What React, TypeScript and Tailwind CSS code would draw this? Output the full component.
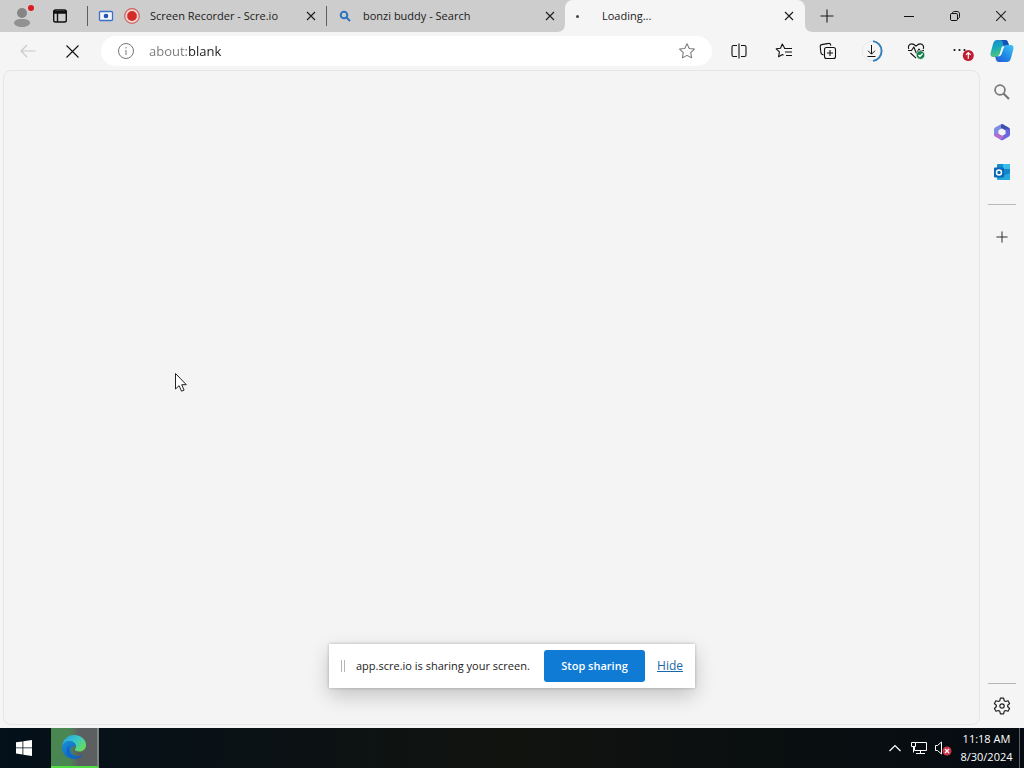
import type { ReactNode } from "react";

const uiFont = "font-['Open_Sans','Noto_Sans',sans-serif]";

function Cross({ size = 10, weight = 1.1 }: { size?: number; weight?: number }) {
  return (
    <svg width={size} height={size} viewBox="0 0 10 10" fill="none" stroke="currentColor" strokeWidth={weight}>
      <path d="M1 1l8 8M9 1l-8 8" />
    </svg>
  );
}

function Plus({ size }: { size: number }) {
  return (
    <svg width={size} height={size} viewBox="0 0 14 14" fill="none" stroke="currentColor" strokeWidth="1.1">
      <path d="M7 0.5v13M0.5 7h13" />
    </svg>
  );
}

function IconButton({ label, className = "", children }: { label: string; className?: string; children: ReactNode }) {
  return (
    <button type="button" aria-label={label} className={`flex items-center justify-center ${className}`}>
      {children}
    </button>
  );
}

function Tab({ icons, title, gap }: { icons: ReactNode; title: string; gap: string }) {
  return (
    <div className="flex h-5 w-[239px] items-center border-l border-[#5f5f5f] pl-[10px] pr-[9px]">
      <div className={`flex items-center ${gap}`}>{icons}</div>
      <span className="flex-1 truncate text-[11px] leading-4">{title}</span>
      <IconButton label={`Close ${title}`} className="h-4 w-3">
        <Cross />
      </IconButton>
    </div>
  );
}

function TabStrip() {
  return (
    <div className="flex h-8 items-center bg-[#cdcdcd] text-[#1b1b1b]">
      <div className="flex w-[87px] items-center">
        <IconButton label="Profile" className="h-8 w-[46px]">
          <svg width="24" height="26" viewBox="0 0 24 26">
            <circle cx="11" cy="10" r="5" fill="#858585" />
            <path d="M3 20c0-2.500 3-4 8-4s8 1.500 8 4c0 2.300-3.500 4-8 4s-8-1.700-8-4z" fill="#929292" />
            <circle cx="20" cy="5" r="3" fill="#dc1b1b" />
          </svg>
        </IconButton>
        <IconButton label="Tab actions menu" className="h-8 w-7">
          <svg width="16" height="16" viewBox="0 0 16 16" fill="none" stroke="#111" strokeWidth="1.400">
            <rect x="1.700" y="2" width="12.600" height="12" rx="1.800" />
            <path d="M1.700 3.500h12.600M1.700 5h12.600M5.500 5v9" />
          </svg>
        </IconButton>
      </div>
      <Tab
        title="Screen Recorder - Scre.io"
        gap="w-[52px] gap-[10px]"
        icons={
          <>
            <svg width="16" height="16" viewBox="0 0 16 16">
              <rect x="1.500" y="3.500" width="13" height="9" rx="1" fill="#f2f6fc" stroke="#3c72c8" strokeWidth="1.300" />
              <circle cx="8" cy="8" r="2.300" fill="#2456ae" />
            </svg>
            <svg width="16" height="16" viewBox="0 0 16 16">
              <circle cx="8" cy="8" r="7.300" fill="#eedcda" stroke="#d2605a" strokeWidth="1.200" />
              <circle cx="8" cy="8" r="4.900" fill="#d22b28" />
            </svg>
          </>
        }
      />
      <Tab
        title="bonzi buddy - Search"
        gap="w-[26px]"
        icons={
          <svg width="16" height="16" viewBox="0 0 16 16" fill="none" stroke="#2c74bd" strokeWidth="2">
            <circle cx="7" cy="7" r="3.300" />
            <path d="M9.500 9.500L13 13" />
          </svg>
        }
      />
      <div className="relative flex h-8 w-60 items-center rounded-t-lg bg-[#f5f5f5] pl-[11px] pr-[10px]">
        <svg className="absolute -left-2 bottom-0" width="8" height="8" viewBox="0 0 8 8">
          <path d="M8 0v8H0c5 0 8-3 8-8z" fill="#f5f5f5" />
        </svg>
        <svg className="absolute -right-2 bottom-0" width="8" height="8" viewBox="0 0 8 8">
          <path d="M0 0v8h8C3 8 0 5 0 0z" fill="#f5f5f5" />
        </svg>
        <span className="flex w-[26px]">
          <span className="mt-px h-[3px] w-[3px] rounded-full bg-[#444]" />
        </span>
        <span className="flex-1 text-[11px] leading-4">Loading...</span>
        <IconButton label="Close Loading tab" className="h-4 w-3">
          <Cross />
        </IconButton>
      </div>
      <IconButton label="New tab" className="h-8 w-11">
        <Plus size={14} />
      </IconButton>
      <div className="ml-auto flex">
        <IconButton label="Minimize" className="h-8 w-[46px]">
          <svg width="10" height="10" viewBox="0 0 10 10" stroke="#111"><path d="M0 5.500h10" /></svg>
        </IconButton>
        <IconButton label="Restore" className="h-8 w-[46px]">
          <svg width="10" height="10" viewBox="0 0 10 10" fill="none" stroke="#111">
            <rect x="0.500" y="2.500" width="7" height="7" rx="1.300" />
            <path d="M2.500 2.200c0-1 .7-1.700 1.700-1.700h3c1.300 0 2.300 1 2.300 2.300v3c0 1-.7 1.700-1.700 1.700" />
          </svg>
        </IconButton>
        <IconButton label="Close window" className="h-8 w-[46px]">
          <Cross size={12} weight={0.9} />
        </IconButton>
      </div>
    </div>
  );
}

const starPath = "M8 1.500l2 4.200 4.600.6-3.300 3.200.8 4.600L8 11.900l-4.100 2.200.8-4.600L1.400 6.300 6 5.700z";

function Toolbar() {
  return (
    <div className="flex h-[38px] items-center bg-[#f5f5f5] pr-1 text-[#111]">
      <IconButton label="Back" className="h-8 w-14 text-[#c8c8c8]">
        <svg width="16" height="14" viewBox="0 0 16 14" fill="none" stroke="currentColor" strokeWidth="1.100">
          <path d="M15.500 7H1M7 1L1 7l6 6" />
        </svg>
      </IconButton>
      <IconButton label="Stop loading" className="mr-[13px] h-8 w-8">
        <Cross size={15} weight={0.75} />
      </IconButton>
      <div className="flex h-[30px] min-w-0 flex-1 items-center rounded-full bg-white pl-4 pr-4">
        <IconButton label="View site information" className="h-6 w-[18px] text-[#777]">
          <svg width="18" height="18" viewBox="0 0 18 18" fill="none" stroke="currentColor">
            <circle cx="9" cy="9" r="7.500" />
            <path d="M9 8v5M9 5v1.500" />
          </svg>
        </IconButton>
        <input
          aria-label="Address"
          className="ml-[14px] h-6 min-w-0 flex-1 bg-linear-to-r from-[#777] from-[39px] to-[#1a1a1a] to-[39px] bg-clip-text text-[13px] leading-5 text-transparent outline-none"
          defaultValue="about:blank"
        />
        <IconButton label="Add to favorites" className="h-6 w-[18px] text-[#777]">
          <svg width="18" height="18" viewBox="0 0 16 16" fill="none" stroke="currentColor" strokeWidth="0.900" strokeLinejoin="round">
            <path d={starPath} />
          </svg>
        </IconButton>
      </div>
      <div className="ml-[5px] grid w-[267px] grid-cols-6">
        <IconButton label="Split screen" className="h-8">
          <svg width="16" height="16" viewBox="0 0 16 16" fill="none" stroke="#111" strokeWidth="1.100">
            <path d="M6 2.500H2.500c-1 0-1.500.5-1.500 1.500v8c0 1 .5 1.500 1.500 1.500H6M10 2.500h3.500c1 0 1.500.5 1.500 1.500v8c0 1-.5 1.500-1.500 1.500H10M8 .5v15" />
          </svg>
        </IconButton>
        <IconButton label="Favorites" className="h-8">
          <svg width="18" height="18" viewBox="0 0 18 18" fill="none" stroke="#111" strokeWidth="1.100" strokeLinejoin="round">
            <path d="M9.800 6.500L7.300 2 5.500 6.200l-4.300.6 3.200 3.100-.8 4.900 3.800-2.200 1.100.6" />
            <path d="M9.200 6.500H17M10 10h7M11 13.500h6" />
          </svg>
        </IconButton>
        <IconButton label="Collections" className="h-8">
          <svg width="18" height="18" viewBox="0 0 18 18" fill="none" stroke="#111" strokeWidth="1.100">
            <path d="M4.500 13L3 12.200c-.7-.3-1-.8-1.100-1.500L1.200 4.500c-.1-1 .4-1.700 1.400-1.900l7.100-1.200c1-.2 1.700.4 1.900 1.300l.2 1" />
            <rect x="5.500" y="5.500" width="11" height="11" rx="2" />
            <path d="M11 8v6M8 11h6" />
          </svg>
        </IconButton>
        <IconButton label="Downloads" className="h-8">
          <svg width="22" height="22" viewBox="0 0 22 22" fill="none">
            <circle cx="10" cy="11" r="9.800" stroke="#e5eaf0" strokeWidth="1" />
            <path d="M11 1.100a10 10 0 0 1 0 19.800" stroke="#327fba" strokeWidth="1.900" />
            <path d="M9.500 5v9M6 10.700l3.500 3.500 3.500-3.500M5.500 16.500h8" stroke="#111" strokeWidth="1" />
          </svg>
        </IconButton>
        <IconButton label="Browser essentials" className="h-8">
          <svg width="20" height="20" viewBox="0 0 20 20" fill="none" stroke="#111" strokeWidth="1.100" strokeLinejoin="round">
            <path d="M1.800 8C.5 5.200 2.500 2.900 4.800 2.900c1.700 0 2.900 1 4.200 2.300 1.300-1.300 2.500-2.300 4.200-2.300 2.300 0 4.300 2.300 3 5.100M3.500 12L9 17.200" />
            <path d="M1 9.500h3.500l2.300-3.500 2.700 6.500 2.500-4.500 1.200 1.500H17" />
            <circle cx="13.500" cy="14" r="4.400" fill="#16834b" stroke="#f5f5f5" strokeWidth=".8" />
            <path d="M11.500 14l1.400 1.500 2.700-3" stroke="white" strokeWidth="1.200" />
          </svg>
        </IconButton>
        <IconButton label="Settings and more" className="h-8">
          <svg width="24" height="20" viewBox="0 0 24 20">
            <circle cx="4.500" cy="9" r="1.100" fill="#111" />
            <circle cx="9.500" cy="9" r="1.100" fill="#111" />
            <circle cx="14.500" cy="9" r="1.100" fill="#111" />
            <circle cx="18.300" cy="14.500" r="5.500" fill="#bf1d32" />
            <path d="M18.300 17.800v-6M16 13.800l2.300-2.300 2.300 2.300" fill="none" stroke="white" strokeWidth="1.200" />
          </svg>
        </IconButton>
      </div>
      <IconButton label="Copilot" className="h-8 w-9">
        <svg width="24" height="24" viewBox="0 0 24 24">
          <defs>
            <linearGradient id="copilot-left" x1="0" y1="0" x2=".3" y2="1">
              <stop stopColor="#1686cf" />
              <stop offset=".5" stopColor="#1aa9b8" />
              <stop offset="1" stopColor="#51c878" />
            </linearGradient>
            <linearGradient id="copilot-right" x1="1" y1="0" x2="0" y2="1">
              <stop stopColor="#45c6f5" />
              <stop offset=".5" stopColor="#218ce7" />
              <stop offset="1" stopColor="#2356d6" />
            </linearGradient>
          </defs>
          <path d="M7 1h8c2 0 2.600 1.200 3.200 3l.8 3h-4c-2 0-3 1-3.600 3l-1.700 5.200C9.200 16.700 8 18 5.800 18H3.200C.8 18 .1 16.300.6 14L3 5C3.700 2.300 5 1 7 1z" fill="url(#copilot-left)" />
          <path d="M15.500 1c1.600 0 2.300 1.500 2.800 3l.8 3h-5.600L13 4c-.4-1.700-1-2.500-2.500-3z" fill="#1750b8" />
          <path d="M17 23H9c-2 0-2.600-1.200-3.200-3L5 17.500h1.500c2.500 0 3.600-1.300 4.200-3.300l1.700-5C13 7.200 14.300 6 16.300 6h4.500c2.400 0 3.100 1.700 2.600 4L21 19c-.7 2.700-2 4-4 4z" fill="url(#copilot-right)" />
          <path d="M12 7.500h2.800c-.8.700-1.200 1.500-1.500 2.500l-1.500 4.500c-.5 1.500-1.200 2.300-2.300 2.700H7.800c1.300-.7 1.800-1.500 2.200-2.800l1.300-4.300c.2-.9.400-1.900.7-2.600z" fill="#eafaff" />
        </svg>
      </IconButton>
    </div>
  );
}

function Sidebar() {
  return (
    <aside className="flex w-11 flex-col items-center">
      <IconButton label="Search" className="mt-[6px] h-8 w-8">
        <svg width="18" height="18" viewBox="0 0 18 18" fill="none" stroke="#777">
          <circle cx="7" cy="7" r="4.900" strokeWidth="1.700" />
          <path d="M10.500 10.500l5.500 5.500" strokeWidth="2.200" />
        </svg>
      </IconButton>
      <IconButton label="Microsoft 365" className="mt-2 h-8 w-8">
        <svg width="18" height="18" viewBox="0 0 18 18">
          <path d="M8 1.200L2.500 4.300C1.500 4.900 1 5.700 1 6.800v5c0 .8.500 1.400 1.200 1.800L5.500 11V7.500L12 3.500 9.800 1.200c-.6-.3-1.200-.3-1.800 0z" fill="#7f8de2" />
          <path d="M9.800 1.200l5.800 3.200c.9.500 1.400 1.300 1.400 2.400v3.400l-4.500-2.700L8 5.200V2.700c0-.8.900-1.900 1.800-1.500z" fill="#3a4fb0" />
          <path d="M17 7v4.500c0 1-.5 1.800-1.400 2.300L10 17c-.7.400-1.400.3-2 0l-2.200-2.200 6.700-3.800V5.500l3.300 1z" fill="#6b66df" />
          <path d="M1.500 10.700l4-.2 5.500 3-3 3.400-5.500-3.100c-.9-.5-1.300-1.700-1-3.100z" fill="#b66bd0" />
          <path d="M9 5.500l3.200 1.800v3.500L9 12.600l-3.200-1.800V7.300z" fill="#f5f5f5" />
        </svg>
      </IconButton>
      <IconButton label="Outlook" className="mt-2 h-8 w-8">
        <svg width="18" height="18" viewBox="0 0 18 18">
          <rect x="4" y="1" width="13" height="15" rx="1" fill="#168cd0" />
          <path d="M10 1h7v5h-7z" fill="#38bce9" />
          <path d="M10 6h7v5h-7z" fill="#1684ca" />
          <path d="M4 16l13-6v6c0 .6-.4 1-1 1H5c-.6 0-1-.4-1-1z" fill="#26a8df" />
          <rect x="1" y="4.500" width="10" height="10" rx="1" fill="#0868b5" />
          <circle cx="6" cy="9.500" r="2.500" fill="none" stroke="white" strokeWidth="1.500" />
        </svg>
      </IconButton>
      <hr className="mt-4 w-7 border-[#b9b9b9]" />
      <IconButton label="Customize sidebar" className="mt-4 h-8 w-8 text-[#222]">
        <Plus size={12} />
      </IconButton>
      <hr className="mt-auto w-7 border-[#b5b5b5]" />
      <IconButton label="Settings" className="mb-[6px] mt-[6px] h-8 w-8">
        <svg width="18" height="18" viewBox="0 0 18 18" fill="none" stroke="#222" strokeWidth="1.200" strokeLinejoin="round">
          <path d="M7.400 1.200h3.200l.6 2.500 1.300.8 2.500-.8 1.600 2.800-1.900 1.700v1.600l1.900 1.700-1.600 2.800-2.500-.8-1.300.8-.6 2.500H7.400l-.6-2.500-1.300-.8-2.500.8-1.600-2.800 1.900-1.700V8.200L1.400 6.500 3 3.700l2.500.8 1.300-.8z" />
          <circle cx="9" cy="9" r="2.200" />
        </svg>
      </IconButton>
    </aside>
  );
}

function SharingBar() {
  return (
    <div className="absolute bottom-20 left-1/2 flex h-11 w-[366px] -translate-x-1/2 items-center bg-white pl-3 pr-3 shadow-[0_8px_20px_rgba(0,0,0,0.2),0_0_3px_rgba(0,0,0,0.25)]">
      <span className="h-3 w-1 border-x border-[#b5b5b5]" />
      <span className="ml-[11px] flex-1 whitespace-nowrap text-[11px] leading-4 text-[#222]">app.scre.io is sharing your screen.</span>
      <button type="button" className="h-8 w-[101px] rounded-[3px] bg-[#0f7bd5] text-[11px] font-semibold text-white">
        Stop sharing
      </button>
      <a href="#hide" className="ml-3 text-[12px] leading-4 text-[#1767ac] underline">Hide</a>
    </div>
  );
}

function Taskbar() {
  return (
    <footer className="flex h-10 bg-linear-to-r from-[#04101a] via-[#11130f] to-[#050b11] text-white">
      <IconButton label="Start" className="h-10 w-[51px] pr-[3px]">
        <svg width="16" height="16" viewBox="0 0 16 16" fill="white">
          <path d="M0 2.300l6.500-.9v6.100H0zM7.300 1.300L16 0v7.500H7.300zM0 8.300h6.500v6.200L0 13.600zM7.300 8.300H16V16l-8.700-1.300z" />
        </svg>
      </IconButton>
      <IconButton label="Microsoft Edge" className="h-10 w-12 border-b-2 border-r-2 border-b-[#52df45] border-r-[#7a857e] bg-linear-to-r from-[#4a8652] from-40% to-[#5b5f60] to-60%">
        <svg width="26" height="26" viewBox="0 0 26 26">
          <defs>
            <linearGradient id="edge-top" x1="0" y1="0" x2="1" y2=".6">
              <stop stopColor="#269edf" />
              <stop offset=".55" stopColor="#37c5ca" />
              <stop offset="1" stopColor="#65db64" />
            </linearGradient>
            <linearGradient id="edge-low" x1="0" y1="0" x2="1" y2="1">
              <stop stopColor="#168fd9" />
              <stop offset="1" stopColor="#1458b0" />
            </linearGradient>
          </defs>
          <path d="M1 12C2 5 7 1 13 1c7 0 12 4.500 12 10 0 4-3 6.500-6.500 6.500-3 0-4.500-1-4.500-2 0-.8 1-1.300 1-3C15 9.500 12 7 8.500 7 5 7 2.500 9 1 12z" fill="url(#edge-top)" />
          <path d="M1 13c.5-3.500 3.500-6 7.500-6 3.700 0 6.500 2.500 6.500 5.500-1-1-4-.5-5 2-1.500 4 2 7.500 7 7.500 2.500 0 4.300-.7 5.600-1.500C20.500 23.500 17 25 13 25 6 25 .5 19.500 1 13z" fill="url(#edge-low)" />
          <path d="M9.500 11.500C6.500 15 8 22 14.500 25 9 24.500 5.500 21 5.500 16.500c0-2.500 1.500-4.500 4-5z" fill="#0f64c8" />
        </svg>
      </IconButton>
      <div className="ml-auto flex items-center">
        <IconButton label="Show hidden icons" className="h-10 w-6">
          <svg width="12" height="8" viewBox="0 0 12 8" fill="none" stroke="white" strokeWidth="1.200"><path d="M.5 7L6 1.500 11.500 7" /></svg>
        </IconButton>
        <IconButton label="Network" className="h-10 w-6">
          <svg width="18" height="16" viewBox="0 0 18 16" fill="none" stroke="white">
            <path d="M5.500 2.500h11v8h-12V7M10.500 10.500v3M6 13.500h9" />
            <path d="M1.500 2.500h4v4h-4zM3.500 6.500v6" />
          </svg>
        </IconButton>
        <IconButton label="Volume muted" className="h-10 w-6">
          <svg width="18" height="16" viewBox="0 0 18 16" fill="none" stroke="white">
            <path d="M1.500 5.500h2L7.500 2v12l-4-3.500h-2z" />
            <circle cx="13" cy="11" r="4.500" fill="#cf3348" stroke="none" />
            <path d="M11 9l4 4M15 9l-4 4" strokeWidth="1.200" />
          </svg>
        </IconButton>
        <div className="mr-px flex w-[63px] flex-col items-center whitespace-nowrap text-[11px] leading-[18px]">
          <span>11:18 AM</span>
          <span>8/30/2024</span>
        </div>
        <span className="mr-1 h-10 w-px bg-[#59616a]" />
      </div>
    </footer>
  );
}

export default function App() {
  return (
    <div className={`relative flex min-h-screen flex-col overflow-hidden bg-[#f5f5f5] ${uiFont}`}>
      <TabStrip />
      <Toolbar />
      <div className="flex flex-1">
        <main className="mb-[3px] ml-[3px] min-w-0 flex-1 rounded-lg border border-[#e6e6e6] bg-[#f4f4f4]" />
        <Sidebar />
      </div>
      <Taskbar />
      <SharingBar />
      <svg className="absolute left-[174px] top-[372px]" width="14" height="21" viewBox="0 0 14 21">
        <path d="M1.500 1.500v15.500l3.600-3.300 2.400 5.500 2.600-1.100-2.400-5.400h4.600z" fill="white" stroke="#222" />
      </svg>
    </div>
  );
}
